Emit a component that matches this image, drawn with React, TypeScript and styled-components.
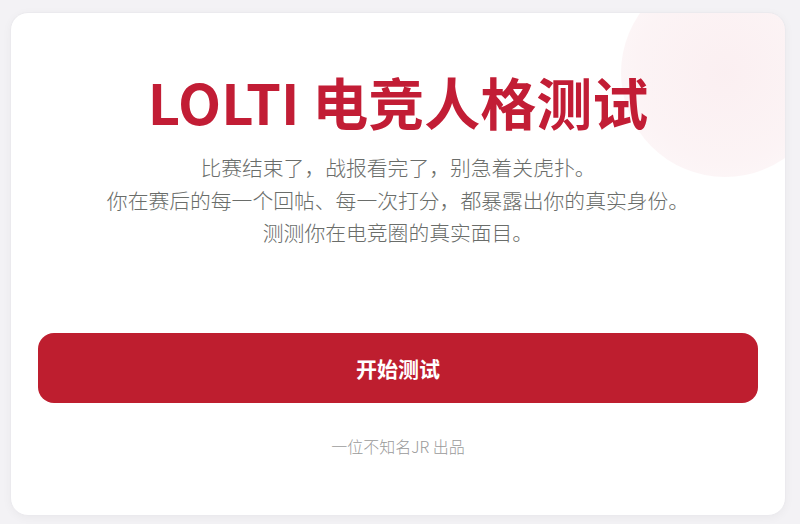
import styled, { createGlobalStyle } from "styled-components";

const GlobalStyle = createGlobalStyle`
  html, body {
    margin: 0;
    padding: 0;
    background: #f3f2f5;
    font-family: "Noto Sans CJK SC", "Noto Sans", sans-serif;
  }
`;

const Page = styled.div`
  box-sizing: border-box;
  width: 800px;
  height: 524px;
  padding: 12px 14px 8px 10px;
`;

const Card = styled.main`
  position: relative;
  overflow: hidden;
  box-sizing: border-box;
  height: 504px;
  background: #ffffff;
  border-radius: 18px;
  border: 1px solid #ebeaee;
  box-shadow: 0 2px 10px rgba(0, 0, 0, 0.04);
  padding: 0 27px;
  display: flex;
  flex-direction: column;
  align-items: stretch;
`;

const Glow = styled.div`
  position: absolute;
  top: -44px;
  right: -44px;
  width: 208px;
  height: 208px;
  border-radius: 50%;
  background: radial-gradient(circle, rgba(196, 30, 58, 0.07) 0%, rgba(196, 30, 58, 0.05) 60%, rgba(196, 30, 58, 0.025) 100%);
  pointer-events: none;
`;

const Title = styled.h1`
  position: relative;
  margin: 48px 0 0;
  text-align: center;
  font-size: 56px;
  font-weight: 700;
  line-height: 80px;
  color: #c21d35;
  letter-spacing: 0;
`;

const Intro = styled.p`
  position: relative;
  margin: 10px 0 0;
  text-align: center;
  font-size: 20.8px;
  font-weight: 300;
  line-height: 32.5px;
  color: #6a6d6a;
`;

const StartButton = styled.button`
  margin-top: 84px;
  height: 70px;
  border: none;
  border-radius: 16px;
  background: #be1e2f;
  color: #ffffff;
  font-family: inherit;
  font-size: 21px;
  font-weight: 700;
  cursor: pointer;
`;

const Credit = styled.div`
  margin-top: 31px;
  text-align: center;
  font-size: 16px;
  font-weight: 300;
  line-height: 24px;
  color: #9a9a9a;
`;

export default function App() {
  return (
    <>
      <GlobalStyle />
      <Page>
        <Card>
          <Glow />
          <Title>LOLTI 电竞人格测试</Title>
          <Intro>
            比赛结束了，战报看完了，别急着关虎扑。
            <br />
            你在赛后的每一个回帖、每一次打分，都暴露出你的真实身份。
            <br />
            测测你在电竞圈的真实面目。
          </Intro>
          <StartButton>开始测试</StartButton>
          <Credit>一位不知名JR 出品</Credit>
        </Card>
      </Page>
    </>
  );
}
